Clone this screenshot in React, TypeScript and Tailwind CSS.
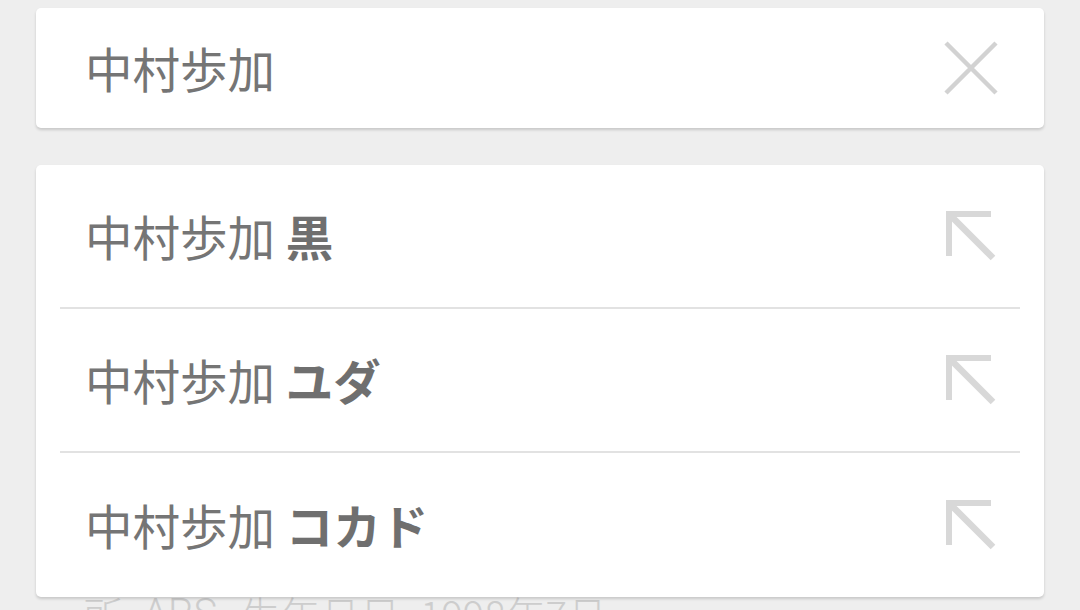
const font = { fontFamily: '"Noto Sans CJK JP", "Noto Sans", sans-serif' };

const suggestions = ["黒", "ユダ", "コカド"];

const CloseIcon = () => (
  <svg width="54" height="54" viewBox="0 0 54 54" className="shrink-0">
    <path d="M2 2 L52 52 M52 2 L2 52" stroke="#d2d2d2" strokeWidth="4.5" fill="none" />
  </svg>
);

const ArrowIcon = () => (
  <svg width="50" height="50" viewBox="0 0 50 50" className="shrink-0">
    <rect x="0" y="0" width="45" height="6" fill="#d8d8d8" />
    <rect x="0" y="0" width="6" height="45" fill="#d8d8d8" />
    <path d="M4 4 L47 47" stroke="#d8d8d8" strokeWidth="6.5" fill="none" />
  </svg>
);

export default function App() {
  return (
    <div className="relative h-[610px] w-[1080px] overflow-hidden bg-[#eeeeee]" style={font}>
      {/* search box */}
      <div className="mx-9 mt-2 flex h-[120px] items-center justify-between rounded-[5px] bg-white pl-[49px] pr-[46px] shadow-[0_2px_3px_rgba(0,0,0,0.16)]">
        <span className="text-[47.5px] leading-none text-[#757575]">中村歩加</span>
        <CloseIcon />
      </div>

      {/* page content behind the dropdown */}
      <div className="mx-9 mt-[466px] flex whitespace-nowrap pl-[47px] text-[40px] font-light leading-none text-[#cdcdcd]">
        <span className="w-[60px]">所</span>
        <span className="w-[97px]" style={{ fontFamily: '"Roboto", sans-serif' }}>ARS</span>
        <span className="w-[180px]">生年月日</span>
        <span>1998年7月</span>
      </div>

      {/* suggestions dropdown */}
      <div className="absolute left-9 right-9 top-[165px] flex flex-col rounded-[5px] bg-white shadow-[0_2px_3px_rgba(0,0,0,0.16)]">
        {suggestions.map((s, i) => (
          <div key={s} className="flex flex-col">
            <div
              className={`flex items-center justify-between pl-[49px] pr-[48px] ${
                i === 2 ? "h-[144px]" : "h-[142px]"
              }`}
            >
              <span className="text-[47.5px] leading-none text-[#757575]">
                中村歩加 <span className="font-bold text-[#6f6f6f]">{s}</span>
              </span>
              <ArrowIcon />
            </div>
            {i < 2 && <div className="mx-6 h-[2px] bg-[#e2e2e2]" />}
          </div>
        ))}
      </div>
    </div>
  );
}
